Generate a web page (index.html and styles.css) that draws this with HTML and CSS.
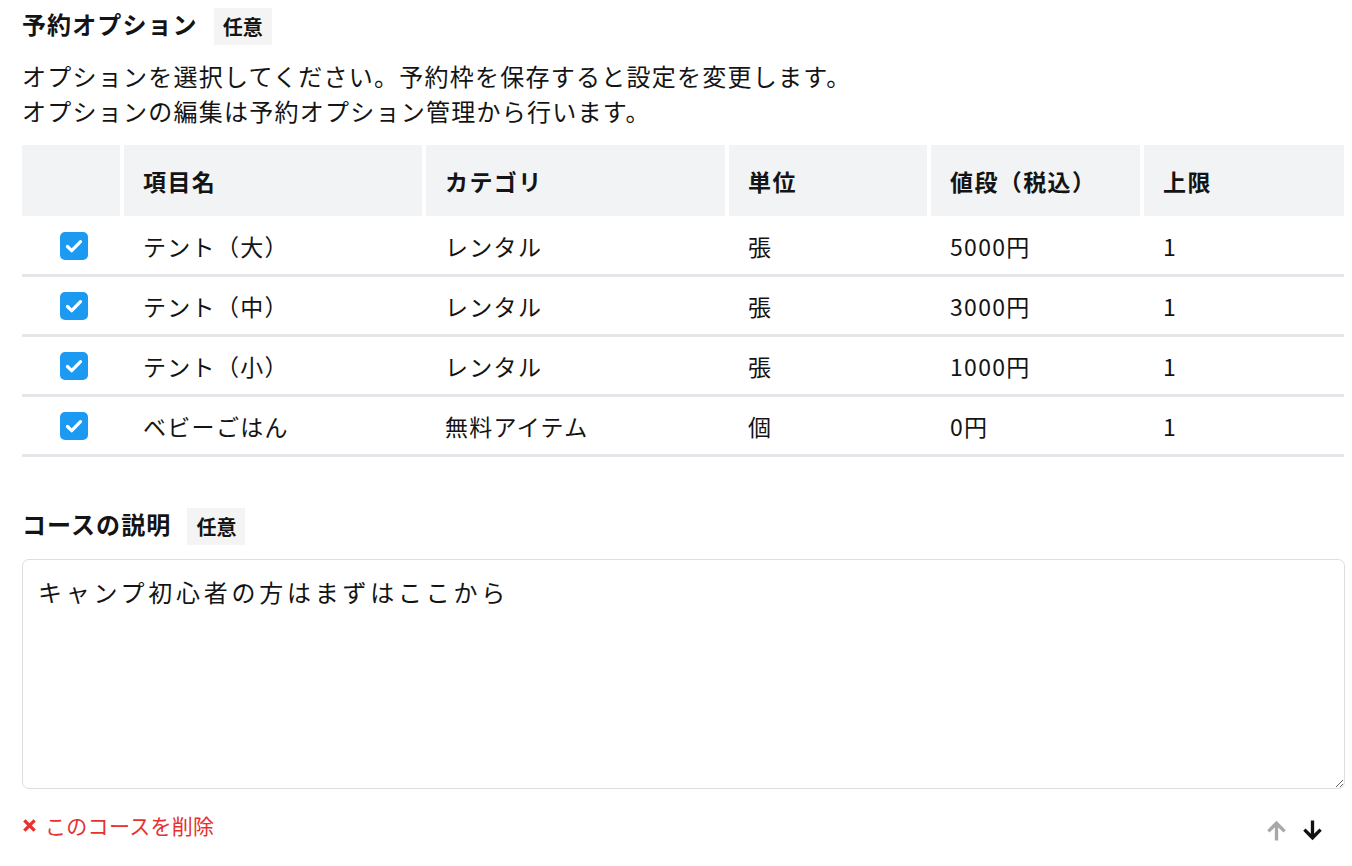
FILE: index.html
```html
<!DOCTYPE html>
<html lang="ja">
<head>
<meta charset="utf-8">
<link rel="stylesheet" href="styles.css">
</head>
<body>
<div class="page">
  <div class="section-title">
    <span class="title-text">予約オプション</span>
    <span class="badge">任意</span>
  </div>
  <p class="desc">オプションを選択してください。予約枠を保存すると設定を変更します。<br>オプションの編集は予約オプション管理から行います。</p>

  <div class="table">
    <div class="row head">
      <div class="cell"></div>
      <div class="cell">項目名</div>
      <div class="cell">カテゴリ</div>
      <div class="cell">単位</div>
      <div class="cell">値段（税込）</div>
      <div class="cell">上限</div>
    </div>
    <div class="row">
      <div class="cell check"><span class="cb"><svg viewBox="0 0 28 28" width="28" height="28"><path d="M7.5 14.5l4.2 4.2 8.8-9" fill="none" stroke="#fff" stroke-width="3.2" stroke-linecap="round" stroke-linejoin="round"/></svg></span></div>
      <div class="cell">テント（大）</div>
      <div class="cell">レンタル</div>
      <div class="cell">張</div>
      <div class="cell">5000円</div>
      <div class="cell">1</div>
    </div>
    <div class="row">
      <div class="cell check"><span class="cb"><svg viewBox="0 0 28 28" width="28" height="28"><path d="M7.5 14.5l4.2 4.2 8.8-9" fill="none" stroke="#fff" stroke-width="3.2" stroke-linecap="round" stroke-linejoin="round"/></svg></span></div>
      <div class="cell">テント（中）</div>
      <div class="cell">レンタル</div>
      <div class="cell">張</div>
      <div class="cell">3000円</div>
      <div class="cell">1</div>
    </div>
    <div class="row">
      <div class="cell check"><span class="cb"><svg viewBox="0 0 28 28" width="28" height="28"><path d="M7.5 14.5l4.2 4.2 8.8-9" fill="none" stroke="#fff" stroke-width="3.2" stroke-linecap="round" stroke-linejoin="round"/></svg></span></div>
      <div class="cell">テント（小）</div>
      <div class="cell">レンタル</div>
      <div class="cell">張</div>
      <div class="cell">1000円</div>
      <div class="cell">1</div>
    </div>
    <div class="row">
      <div class="cell check"><span class="cb"><svg viewBox="0 0 28 28" width="28" height="28"><path d="M7.5 14.5l4.2 4.2 8.8-9" fill="none" stroke="#fff" stroke-width="3.2" stroke-linecap="round" stroke-linejoin="round"/></svg></span></div>
      <div class="cell">ベビーごはん</div>
      <div class="cell">無料アイテム</div>
      <div class="cell">個</div>
      <div class="cell">0円</div>
      <div class="cell">1</div>
    </div>
  </div>

  <div class="section-title second">
    <span class="title-text">コースの説明</span>
    <span class="badge">任意</span>
  </div>
  <textarea class="memo">キャンプ初心者の方はまずはここから</textarea>

  <div class="footer">
    <a class="delete" href="#">
      <svg class="x-icon" viewBox="0 0 16 16" width="15" height="15"><path d="M2.5 2.5l11 11M13.5 2.5l-11 11" stroke="#e5312f" stroke-width="3.6" stroke-linecap="butt"/></svg>
      <span>このコースを削除</span>
    </a>
    <div class="arrows">
      <svg class="arrow up" viewBox="0 0 24 24" width="25" height="25"><path d="M12 21.5V5M4.2 12.8L12 5l7.8 7.8" fill="none" stroke="#a8a8a8" stroke-width="3.2"/></svg>
      <svg class="arrow down" viewBox="0 0 24 24" width="25" height="25"><path d="M12 2.5V19M4.2 11.2L12 19l7.8-7.8" fill="none" stroke="#111" stroke-width="3.2"/></svg>
    </div>
  </div>
</div>
</body>
</html>
```

FILE: styles.css
```css
html, body {
  margin: 0;
  padding: 0;
  background: #fff;
}
body {
  font-family: "Noto Sans CJK JP", "Noto Sans", sans-serif;
  color: #141414;
}
.page {
  padding: 8px 8px 0 22px;
}
.section-title {
  display: flex;
  align-items: center;
  gap: 16px;
  height: 37px;
}
.section-title.second {
  margin-top: 51px;
}
.title-text {
  font-size: 24px;
  font-weight: 700;
  letter-spacing: 1.1px;
  line-height: 30px;
  margin-top: -5px;
}
.badge {
  display: inline-flex;
  align-items: center;
  height: 37px;
  padding: 0 9px;
  background: #f4f4f4;
  font-size: 20px;
  font-weight: 700;
}
.desc {
  margin: 13px 0 0;
  font-size: 24px;
  line-height: 35px;
  letter-spacing: 1.25px;
}
.table {
  margin-top: 17px;
  width: 1322px;
}
.row {
  display: grid;
  grid-template-columns: 98px 298px 299px 198px 209px 1fr;
  column-gap: 4px;
  height: 57px;
  border-bottom: 3px solid #e5e5ea;
  align-items: center;
  font-size: 23px;
  letter-spacing: 1.3px;
}
.row.head {
  height: 71px;
  border-bottom: none;
  align-items: stretch;
  font-weight: 700;
  font-size: 23px;
  letter-spacing: 1.4px;
}
.row.head .cell {
  background: #f2f3f5;
  display: flex;
  align-items: center;
}
.row.head + .row {
  margin-top: 1px;
}
.cell {
  padding-left: 19px;
  white-space: nowrap;
}
.cell.check {
  display: flex;
  justify-content: center;
  padding-left: 6px;
}
.cb {
  width: 28px;
  height: 28px;
  border-radius: 5px;
  background: #1c9af2;
  display: block;
}
.cb svg {
  display: block;
}
.memo {
  display: block;
  box-sizing: border-box;
  width: 1323px;
  height: 230px;
  margin-top: 14px;
  padding: 14px 15px;
  border: 1px solid #dedede;
  border-radius: 7px;
  font-family: "Noto Sans CJK JP", "Noto Sans", sans-serif;
  font-size: 24px;
  line-height: 36px;
  letter-spacing: 3.75px;
  color: #141414;
  resize: vertical;
  outline: none;
}
.footer {
  display: flex;
  justify-content: space-between;
  align-items: flex-start;
  width: 1322px;
  margin-top: 22px;
}
.delete {
  display: flex;
  align-items: center;
  gap: 8px;
  color: #e5312f;
  text-decoration: none;
  font-size: 21px;
  letter-spacing: 0.3px;
  line-height: 28px;
}
.x-icon {
  display: block;
}
.arrows {
  display: flex;
  gap: 11px;
  margin-top: 7px;
  margin-right: 19px;
}
.arrow {
  display: block;
}
```
